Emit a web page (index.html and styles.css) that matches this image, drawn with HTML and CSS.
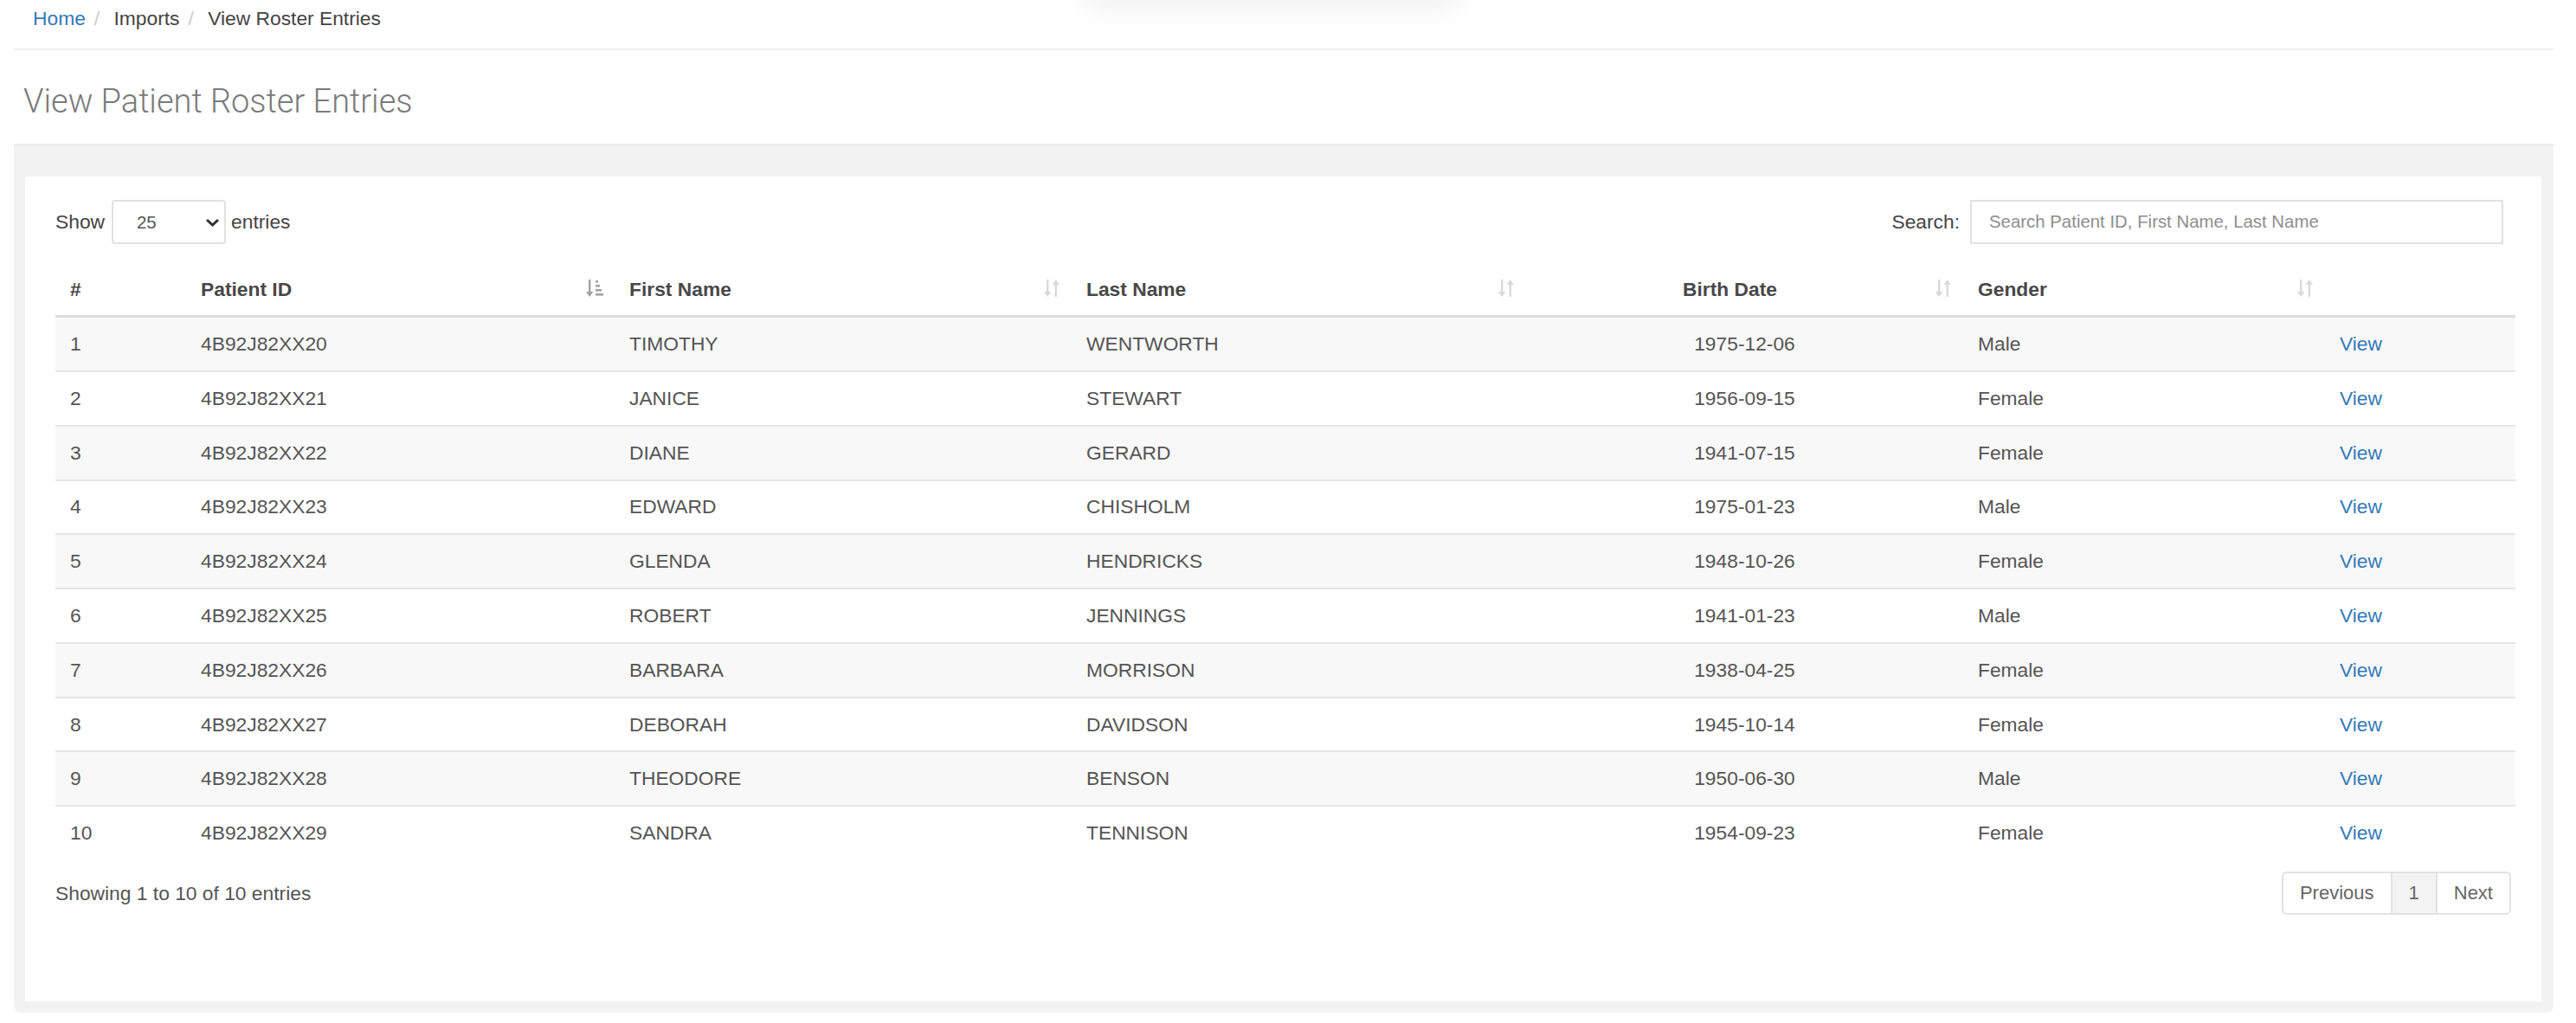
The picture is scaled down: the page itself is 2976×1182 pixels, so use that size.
FILE: index.html
```html
<!DOCTYPE html>
<html lang="en">
<head>
    <meta charset="UTF-8">
    <meta name="viewport" content="width=device-width, initial-scale=1.0">
    <title>View Patient Roster Entries</title>
    <link rel="stylesheet" href="styles.css">
</head>
<body>

    <!-- shadow of the popover sitting just above the window -->
    <div class="top-shadow"></div>

    <div class="page">
        <ol class="breadcrumb">
            <li><a href="#">Home</a></li>
            <li>Imports</li>
            <li class="active">View Roster Entries</li>
        </ol>

        <h1 class="page-title">View Patient Roster Entries</h1>

        <div class="panel">
            <div class="card">
                <div class="dt-top">
                    <label class="dt-length">Show
                        <span class="select-wrap">
                            <select><option>25</option><option>50</option><option>100</option></select>
                            <svg class="chevron" width="17" height="10" viewBox="0 0 17 10"><polyline points="2,2 8.5,8 15,2" fill="none" stroke="#333" stroke-width="3"/></svg>
                        </span>
                        entries</label>
                    <label class="dt-filter">Search:
                        <input type="search" placeholder="Search Patient ID, First Name, Last Name">
                    </label>
                </div>

                <table class="roster">
                    <colgroup>
                        <col style="width: 151px">
                        <col style="width: 495px">
                        <col style="width: 528px">
                        <col style="width: 525px">
                        <col style="width: 505px">
                        <col style="width: 418px">
                        <col style="width: 220px">
                    </colgroup>
                    <thead>
                        <tr>
                            <th>#</th>
                            <th class="sortable">Patient ID
                                <svg class="sort-icon" width="20" height="22" viewBox="0 0 20 22"><g fill="#a3a3a3"><rect x="3" y="1" width="2.4" height="15"/><polygon points="0,15 8.4,15 4.2,21"/><rect x="11" y="2" width="3" height="2.6"/><rect x="11" y="7" width="5" height="2.6"/><rect x="11" y="12" width="7" height="2.6"/><rect x="11" y="17" width="9" height="2.6"/></g></svg>
                            </th>
                            <th class="sortable">First Name
                                <svg class="sort-icon" width="20" height="22" viewBox="0 0 20 22"><g fill="#d9d9d9"><rect x="4" y="1" width="2.4" height="15"/><polygon points="1,15 9.4,15 5.2,21"/><polygon points="10.6,7 19,7 14.8,1"/><rect x="13.6" y="6" width="2.4" height="15"/></g></svg>
                            </th>
                            <th class="sortable">Last Name
                                <svg class="sort-icon" width="20" height="22" viewBox="0 0 20 22"><g fill="#d9d9d9"><rect x="4" y="1" width="2.4" height="15"/><polygon points="1,15 9.4,15 5.2,21"/><polygon points="10.6,7 19,7 14.8,1"/><rect x="13.6" y="6" width="2.4" height="15"/></g></svg>
                            </th>
                            <th class="sortable center">Birth Date
                                <svg class="sort-icon" width="20" height="22" viewBox="0 0 20 22"><g fill="#d9d9d9"><rect x="4" y="1" width="2.4" height="15"/><polygon points="1,15 9.4,15 5.2,21"/><polygon points="10.6,7 19,7 14.8,1"/><rect x="13.6" y="6" width="2.4" height="15"/></g></svg>
                            </th>
                            <th class="sortable">Gender
                                <svg class="sort-icon" width="20" height="22" viewBox="0 0 20 22"><g fill="#d9d9d9"><rect x="4" y="1" width="2.4" height="15"/><polygon points="1,15 9.4,15 5.2,21"/><polygon points="10.6,7 19,7 14.8,1"/><rect x="13.6" y="6" width="2.4" height="15"/></g></svg>
                            </th>
                            <th></th>
                        </tr>
                    </thead>
                    <tbody>
                        <tr><td>1</td><td>4B92J82XX20</td><td>TIMOTHY</td><td>WENTWORTH</td><td class="center">1975-12-06</td><td>Male</td><td><a href="#">View</a></td></tr>
                        <tr><td>2</td><td>4B92J82XX21</td><td>JANICE</td><td>STEWART</td><td class="center">1956-09-15</td><td>Female</td><td><a href="#">View</a></td></tr>
                        <tr><td>3</td><td>4B92J82XX22</td><td>DIANE</td><td>GERARD</td><td class="center">1941-07-15</td><td>Female</td><td><a href="#">View</a></td></tr>
                        <tr><td>4</td><td>4B92J82XX23</td><td>EDWARD</td><td>CHISHOLM</td><td class="center">1975-01-23</td><td>Male</td><td><a href="#">View</a></td></tr>
                        <tr><td>5</td><td>4B92J82XX24</td><td>GLENDA</td><td>HENDRICKS</td><td class="center">1948-10-26</td><td>Female</td><td><a href="#">View</a></td></tr>
                        <tr><td>6</td><td>4B92J82XX25</td><td>ROBERT</td><td>JENNINGS</td><td class="center">1941-01-23</td><td>Male</td><td><a href="#">View</a></td></tr>
                        <tr><td>7</td><td>4B92J82XX26</td><td>BARBARA</td><td>MORRISON</td><td class="center">1938-04-25</td><td>Female</td><td><a href="#">View</a></td></tr>
                        <tr><td>8</td><td>4B92J82XX27</td><td>DEBORAH</td><td>DAVIDSON</td><td class="center">1945-10-14</td><td>Female</td><td><a href="#">View</a></td></tr>
                        <tr><td>9</td><td>4B92J82XX28</td><td>THEODORE</td><td>BENSON</td><td class="center">1950-06-30</td><td>Male</td><td><a href="#">View</a></td></tr>
                        <tr><td>10</td><td>4B92J82XX29</td><td>SANDRA</td><td>TENNISON</td><td class="center">1954-09-23</td><td>Female</td><td><a href="#">View</a></td></tr>
                    </tbody>
                </table>

                <div class="dt-bottom">
                    <div class="dt-info">Showing 1 to 10 of 10 entries</div>
                    <ul class="pagination">
                        <li><a href="#">Previous</a></li>
                        <li class="active"><a href="#">1</a></li>
                        <li><a href="#">Next</a></li>
                    </ul>
                </div>
            </div>
        </div>
    </div>

</body>
</html>
```

FILE: styles.css
```css
body {
    font-family: "Liberation Sans", Arial, sans-serif;
    font-size: 22.8px;
    margin: 0;
    padding: 0;
    color: #555;
    background: #fff;
}
a {
    color: #337ab7;
    text-decoration: none;
}

.top-shadow {
    position: absolute;
    top: -70px;
    left: 1250px;
    width: 440px;
    height: 70px;
    border-radius: 30px;
    box-shadow: 0 8px 34px rgba(30, 30, 60, 0.07);
}

.page {
    padding: 0 26px 0 16px;
}

/* Breadcrumb */
.breadcrumb {
    list-style: none;
    margin: 0;
    padding: 4px 22px 18px;
    line-height: 34px;
    border-bottom: 2px solid #eee;
    display: flex;
    color: #444;
}
.breadcrumb li + li:before {
    content: "/\00a0";
    padding: 0 10px;
    color: #ccc;
}

.page-title {
    font-family: Roboto, "Liberation Sans", sans-serif;
    font-weight: 300;
    font-size: 38px;
    line-height: 60px;
    color: #7a7a7a;
    margin: 29px 0 19px;
    padding: 0 11px;
}

/* Grey wrapper + white card */
.panel {
    background: #f2f2f2;
    border-top: 2px solid #ebebec;
    padding: 36px 14px 13px 13px;
    border-radius: 0 0 8px 8px;
}
.card {
    background: #fff;
    padding: 27px 30px 100px 35px;
}

/* Top controls */
.dt-top {
    display: flex;
    justify-content: space-between;
    align-items: center;
    height: 51px;
    color: #444;
}
.dt-length, .dt-filter {
    display: flex;
    align-items: center;
}
.select-wrap {
    position: relative;
    margin: 0 6px 0 8px;
}
.select-wrap select {
    appearance: none;
    -webkit-appearance: none;
    width: 132px;
    height: 51px;
    border: 2px solid #e2e2e2;
    border-radius: 4px;
    background: #fff;
    padding: 0 0 0 27px;
    font-family: inherit;
    font-size: 20.4px;
    color: #555;
    display: block;
}
.chevron {
    position: absolute;
    left: 108px;
    top: 21px;
    pointer-events: none;
}
.dt-filter input {
    width: 616px;
    height: 51px;
    box-sizing: border-box;
    margin: 0 14px 0 12px;
    border: 2px solid #e2e2e2;
    border-radius: 0;
    padding: 0 0 0 20px;
    font-family: inherit;
    font-size: 20.4px;
    color: #555;
}
.dt-filter input::placeholder {
    color: #8e8e8e;
}

/* Table */
.roster {
    width: 100%;
    table-layout: fixed;
    border-collapse: separate;
    border-spacing: 0;
    margin-top: 21px;
}
.roster th {
    position: relative;
    text-align: left;
    font-weight: bold;
    color: #484848;
    line-height: 34px;
    padding: 13.6px 17px;
    border-bottom: 3px solid #dcdcdc;
}
.roster th.sortable {
    padding-right: 51px;
}
.sort-icon {
    position: absolute;
    right: 13px;
    top: 50%;
    margin-top: -12px;
}
.roster td {
    line-height: 33px;
    padding: 13.9px 17px;
    border-top: 2px solid #e6e6e6;
    white-space: nowrap;
}
.roster tbody tr:first-child td {
    border-top: none;
}
.roster tbody tr:nth-child(odd) td {
    background: #f8f8f8;
}
.roster .center {
    text-align: center;
}

/* Bottom: info + pager */
.dt-bottom {
    display: flex;
    justify-content: space-between;
    align-items: center;
    margin-top: 14px;
}
.pagination {
    list-style: none;
    display: flex;
    margin: 0 5px 0 0;
    padding: 0;
    border: 2px solid #e2e2e2;
    border-radius: 6px;
    overflow: hidden;
}
.pagination li + li {
    border-left: 2px solid #e2e2e2;
}
.pagination a {
    display: block;
    padding: 0 19px;
    line-height: 46px;
    font-size: 22px;
    color: #666;
}
.pagination .active a {
    background: #f3f3f3;
}
```
